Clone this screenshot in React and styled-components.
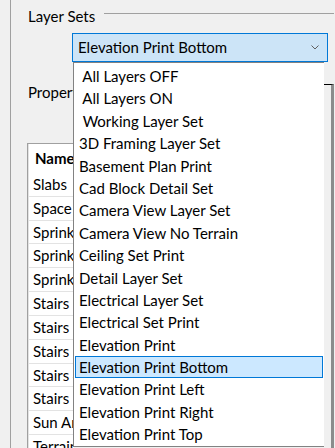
import React from "react"
import styled, { createGlobalStyle } from "styled-components"

const GlobalStyle = createGlobalStyle`
  html, body {
    margin: 0;
    padding: 0;
    background: #f0f0f0;
  }
  body {
    font-family: Lato, "Noto Sans", sans-serif;
    font-size: 15px;
    color: #000;
  }
`

const Window = styled.div`
  position: relative;
  height: 100vh;
  overflow: hidden;
  padding: 0 1px 0 10px;
  box-sizing: border-box;
`

const Frame = styled.div`
  height: 100%;
  border-left: 1px solid #a0a0a0;
  padding-left: 16px;
  display: flex;
  flex-direction: column;
`

const GroupHeader = styled.div`
  display: flex;
  align-items: flex-start;
  margin-top: 6px;
  padding-left: 1px;
`

const GroupLabel = styled.span`
  line-height: 20px;
  white-space: nowrap;
`

const Rule = styled.div`
  flex: 1;
  height: 1px;
  margin: 7px 0 0 9px;
  background: #a0a0a0;
`

const Combo = styled.div`
  display: flex;
  align-items: center;
  justify-content: space-between;
  box-sizing: border-box;
  width: 256px;
  height: 29px;
  margin: 7px 0 0 45px;
  padding: 0 8px 0 5px;
  border: 1px solid #0078d7;
  background: #cce4f7;
  line-height: 27px;
  white-space: nowrap;
`

const Chevron = () => (
  <svg width="8" height="5" viewBox="0 0 8 5">
    <polyline points="0.5,0.5 4,4 7.5,0.5" fill="none" stroke="#606060" strokeWidth="1" />
  </svg>
)

const Properties = styled.div`
  flex: 1;
  display: grid;
  grid-template-columns: 47px 1fr;
  grid-template-rows: auto 1fr;
  margin-top: 20px;
`

const SectionLabel = styled.div`
  grid-column: 1;
  grid-row: 1;
  line-height: 20px;
  padding-left: 1px;
  white-space: nowrap;
  overflow: hidden;
`

const SidePane = styled.div`
  grid-column: 2;
  grid-row: 1 / 3;
  margin-top: 2px;
  border-top: 1px solid #000;
  border-right: 3px solid #8c8c8c;
`

const Table = styled.div`
  grid-column: 1;
  grid-row: 2;
  align-self: start;
  margin-top: 41px;
  border: 1px solid #a0a0a0;
  border-right: none;
  background: #fff;
  overflow: hidden;
`

const HeaderRow = styled.div`
  height: 29px;
  line-height: 29px;
  padding-left: 6px;
  font-weight: 700;
  border-left: 1px solid #e3e3e3;
  white-space: nowrap;
`

const Row = styled.div`
  height: 22.83px;
  line-height: 22.83px;
  padding-left: 4px;
  border-bottom: 1px solid #e3e3e3;
  border-left: 1px solid #e3e3e3;
  white-space: nowrap;
`

const DropList = styled.div`
  position: absolute;
  left: 73px;
  top: 62px;
  width: 250px;
  padding-top: 2px;
  border: 1px solid #828282;
  border-right: none;
  background: #fff;
`

const Item = styled.div`
  height: 22.4px;
  box-sizing: border-box;
  margin: 0 1px;
  padding-left: 3px;
  line-height: 20.4px;
  border: 1px solid ${(p) => (p.$selected ? "#0078d7" : "transparent")};
  background: ${(p) => (p.$selected ? "#cce8ff" : "transparent")};
  white-space: pre;
`

const layerSets = [
  " All Layers OFF",
  " All Layers ON",
  " Working Layer Set",
  "3D Framing Layer Set",
  "Basement Plan Print",
  "Cad Block Detail Set",
  "Camera View Layer Set",
  "Camera View No Terrain",
  "Ceiling Set Print",
  "Detail Layer Set",
  "Electrical Layer Set",
  "Electrical Set Print",
  "Elevation Print",
  "Elevation Print Bottom",
  "Elevation Print Left",
  "Elevation Print Right",
  "Elevation Print Top",
]

const layers = [
  "Slabs",
  "Space Planning",
  "Sprinkler Heads",
  "Sprinkler Lines",
  "Sprinkler Pipes",
  "Stairs 1",
  "Stairs 2",
  "Stairs 3",
  "Stairs 4",
  "Stairs 5",
  "Sun Angle",
  "Terrain",
]

const selected = "Elevation Print Bottom"

export default function App() {
  return (
    <>
      <GlobalStyle />
      <Window>
        <Frame>
          <GroupHeader>
            <GroupLabel>Layer Sets</GroupLabel>
            <Rule />
          </GroupHeader>
          <Combo>
            <span>{selected}</span>
            <Chevron />
          </Combo>
          <Properties>
            <SectionLabel>Properties</SectionLabel>
            <Table>
              <HeaderRow>Name</HeaderRow>
              {layers.map((name, i) => (
                <Row key={i}>{name}</Row>
              ))}
            </Table>
            <SidePane />
          </Properties>
        </Frame>
        <DropList>
          {layerSets.map((name) => (
            <Item key={name} $selected={name === selected}>
              {name}
            </Item>
          ))}
        </DropList>
      </Window>
    </>
  )
}
